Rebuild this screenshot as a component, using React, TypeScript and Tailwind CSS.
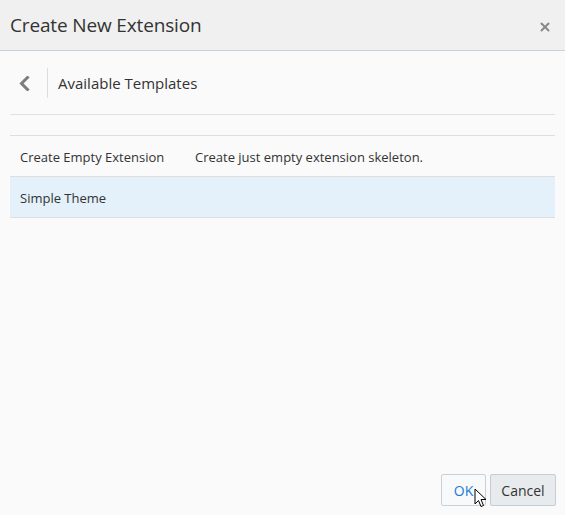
import { X } from "lucide-react";

const templates = [
  { name: "Create Empty Extension", description: "Create just empty extension skeleton.", selected: false },
  { name: "Simple Theme", description: "", selected: true },
];

function Cursor() {
  return (
    <svg width="13" height="20" viewBox="0 0 13 20" className="absolute left-[33px] top-[14px]">
      <path d="M1 1 L1 16 L4.5 12.5 L7 18.5 L9.5 17.5 L7 11.5 L12 11.5 Z" fill="#fff" stroke="#000" strokeWidth="1" strokeLinejoin="round" />
    </svg>
  );
}

function BackChevron() {
  return (
    <svg width="11" height="15" viewBox="0 0 11 15">
      <path d="M8.5 1.5 L2.5 7.5 L8.5 13.5" fill="none" stroke="#7d7d7d" strokeWidth="3" strokeLinecap="square" strokeLinejoin="miter" />
    </svg>
  );
}

export default function App() {
  return (
    <div className="w-[565px] h-[515px] flex flex-col bg-[#fafafa] text-[#333] font-['Open_Sans',sans-serif] overflow-hidden">
      {/* Dialog header */}
      <div className="h-[51px] shrink-0 flex items-center justify-between pl-[10px] pr-[14px] bg-[#f0f0f0] border-b border-[#c9d1d9]">
        <h1 className="text-[19px] text-[#333] tracking-[-0.15px]">Create New Extension</h1>
        <X size={14} strokeWidth={3.4} className="text-[#888] mt-[3px] mr-[-1px]" />
      </div>

      <div className="flex-1 flex flex-col px-[10px]">
        {/* Breadcrumb bar */}
        <div className="h-[64px] flex items-center border-b border-[#dde3e9]">
          <div className="w-[38px] h-[30px] mt-[1px] flex items-center pl-[9px] border-r border-[#dddddd]">
            <BackChevron />
          </div>
          <span className="pl-[10px] pt-[2px] text-[15px] text-[#333]">Available Templates</span>
        </div>

        {/* Template list */}
        <div className="mt-[20px] border-t border-[#dedede]">
          {templates.map((t) => (
            <div
              key={t.name}
              className={`h-[41px] flex items-center pt-[3px] border-b border-[#dedede] text-[13px] ${t.selected ? "bg-[#e4f0fa]" : ""}`}
            >
              <span className="w-[185px] pl-[10px]">{t.name}</span>
              <span>{t.description}</span>
            </div>
          ))}
        </div>

        {/* Actions */}
        <div className="mt-auto mb-[9px] mr-[-1px] flex justify-end gap-[4px]">
          <div className="relative">
            <button className="h-[32px] w-[45px] bg-[#f7f9fa] border border-[#c8d0d8] rounded-[2px] text-[14px] text-[#1f7ad1]">
              OK
            </button>
            <Cursor />
          </div>
          <button className="h-[32px] w-[66px] bg-[#e7ebee] border border-[#c4ccd4] rounded-[2px] text-[14px] text-[#333]">
            Cancel
          </button>
        </div>
      </div>
    </div>
  );
}
